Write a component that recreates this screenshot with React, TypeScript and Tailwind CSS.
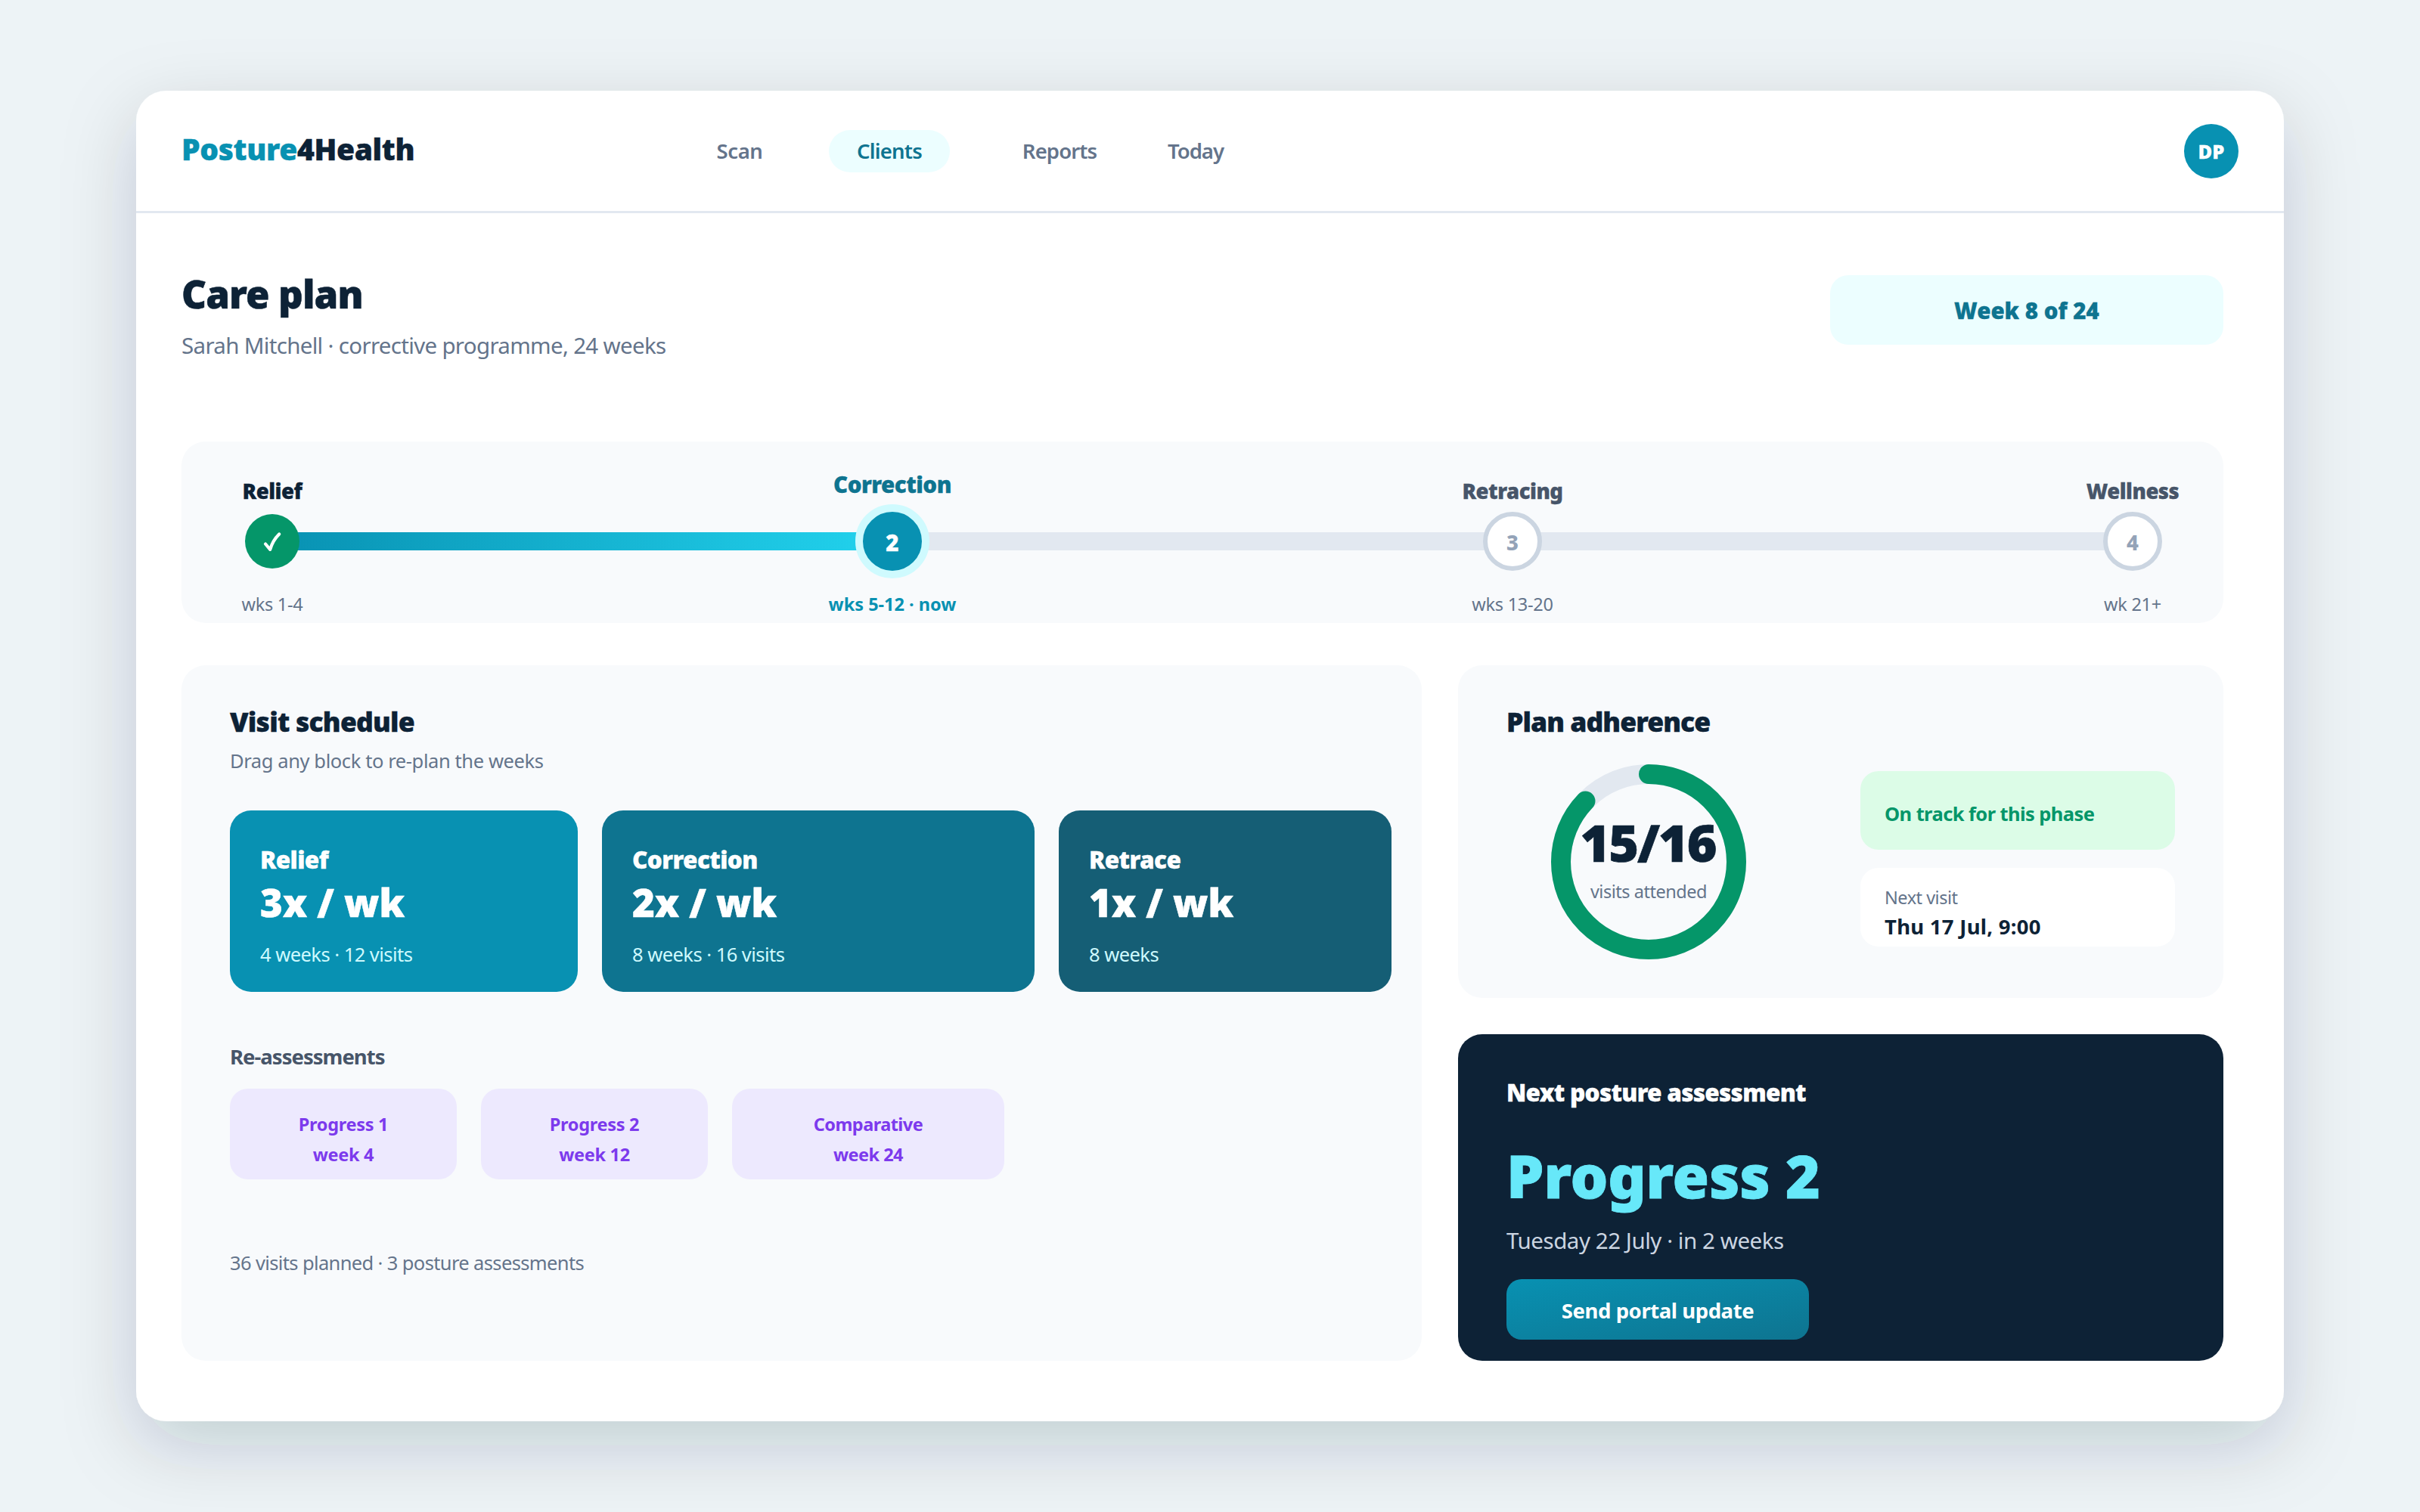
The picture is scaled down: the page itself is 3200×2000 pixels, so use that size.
import clsx from "clsx";

const navItems = [
  { label: "Scan", className: "w-[60px] tracking-[-0.4px] text-[#64748b]" },
  { label: "Clients", className: "ml-[88px] h-14 w-40 rounded-full bg-[#ecfeff] tracking-[-0.78px] text-[#0e7490]" },
  { label: "Reports", className: "ml-[96px] w-[98px] tracking-[-0.9px] text-[#64748b]" },
  { label: "Today", className: "ml-[93px] w-[76px] tracking-[-1px] text-[#64748b]" },
];

const blocks = [
  { name: "Relief", rate: "3x / wk", detail: "4 weeks · 12 visits", className: "w-[460px] bg-[#0891b2]" },
  { name: "Correction", rate: "2x / wk", detail: "8 weeks · 16 visits", className: "w-[572px] bg-[#0e7490]" },
  { name: "Retrace", rate: "1x / wk", detail: "8 weeks", className: "w-[440px] bg-[#155e75]" },
];

const reassessments = [
  { name: "Progress 1", week: "week 4", className: "w-[300px] tracking-[-0.3px]" },
  { name: "Progress 2", week: "week 12", className: "w-[300px] tracking-[-0.3px]" },
  { name: "Comparative", week: "week 24", className: "w-[360px] tracking-[-0.55px]" },
];

type PhaseState = "done" | "current" | "upcoming";

const phases: { name: string; weeks: string; state: PhaseState; step: number }[] = [
  { name: "Relief", weeks: "wks 1-4", state: "done", step: 1 },
  { name: "Correction", weeks: "wks 5-12 · now", state: "current", step: 2 },
  { name: "Retracing", weeks: "wks 13-20", state: "upcoming", step: 3 },
  { name: "Wellness", weeks: "wk 21+", state: "upcoming", step: 4 },
];

// Extra-heavy display weight
const heavy = "font-black [-webkit-text-stroke-width:0.01em]";

function PhaseNode({ state, step }: { state: PhaseState; step: number }) {
  if (state === "done") {
    return (
      <div className="size-[72px] rounded-full bg-[#059669]">
        <svg viewBox="0 0 72 72" className="size-full" fill="none">
          <path
            d="M27 39.5 L33.2 46.8 C35.5 39 39.5 32 45.2 26.5"
            stroke="#fff"
            strokeWidth="4.2"
            strokeLinecap="round"
            strokeLinejoin="round"
          />
        </svg>
      </div>
    );
  }
  if (state === "current") {
    return (
      <div
        className={clsx(
          "flex size-[98px] items-center justify-center rounded-full border-[10px] border-[#cffafe] bg-[#0891b2] pt-[5px] text-[29.5px] text-white",
          heavy,
        )}
      >
        {step}
      </div>
    );
  }
  return (
    <div className="flex size-[78px] items-center justify-center rounded-full border-[6px] border-[#cbd5e1] bg-white pt-[3px] text-[27.5px] font-extrabold text-[#94a3b8]">
      {step}
    </div>
  );
}

function Timeline() {
  return (
    <section className="relative flex h-60 justify-between rounded-[32px] bg-[#f8fafc]">
      {/* Track */}
      <div className="absolute inset-x-[120px] top-[120px] h-6 bg-[#e2e8f0]">
        <div className="h-full w-1/3 bg-[linear-gradient(to_right,#0891b2,#22d3ee)]" />
      </div>
      {phases.map((phase) => (
        <div key={phase.name} className="relative flex w-60 flex-col items-center whitespace-nowrap">
          <div
            className={clsx(
              "flex h-[84px] items-end leading-9 tracking-[-0.5px]",
              heavy,
              phase.state === "done" && "text-[27.5px] text-[#0d2236]",
              phase.state === "current" && "pb-[9px] text-[29.5px] text-[#0e7490]",
              phase.state === "upcoming" && "text-[27.5px] text-[#475569]",
            )}
          >
            {phase.name}
          </div>
          <div className="-mt-px flex h-[98px] items-center">
            <PhaseNode state={phase.state} step={phase.step} />
          </div>
          <div
            className={clsx(
              "mt-3.5 text-[23.5px] leading-10",
              phase.state === "current" ? "font-bold text-[#0891b2]" : "tracking-[-0.25px] text-[#64748b]",
            )}
          >
            {phase.weeks}
          </div>
        </div>
      ))}
    </section>
  );
}

function VisitSchedule() {
  return (
    <section className="w-[1640px] rounded-[32px] bg-[#f8fafc] pt-[50px] pr-10 pl-16">
      <h2 className={clsx("text-[35.5px] leading-[48px] tracking-[-0.78px] text-[#0d2236]", heavy)}>Visit schedule</h2>
      <p className="mt-2.5 text-[25.5px] leading-9 tracking-[-0.4px] text-[#64748b]">
        Drag any block to re-plan the weeks
      </p>
      <div className="mt-12 flex gap-8">
        {blocks.map((block) => (
          <div key={block.name} className={clsx("h-60 rounded-[28px] px-10 pt-[45px]", block.className)}>
            <div className={clsx("text-[31.5px] leading-10 tracking-[-0.6px] text-white", heavy)}>{block.name}</div>
            <div className={clsx("mt-1 text-[51px] leading-[64px] text-white", heavy)}>{block.rate}</div>
            <div className="mt-[19px] text-[25.5px] leading-9 tracking-[-0.53px] text-[#cffafe]">{block.detail}</div>
          </div>
        ))}
      </div>
      <h3 className="mt-[66px] text-[27.5px] leading-10 font-bold tracking-[-0.98px] text-[#475569]">Re-assessments</h3>
      <div className="mt-[22px] flex gap-8">
        {reassessments.map((item) => (
          <div
            key={item.name}
            className={clsx(
              "h-[120px] rounded-3xl bg-[#ede9fe] pt-[27px] text-center text-[23.5px] leading-10 font-bold text-[#7c3aed]",
              item.className,
            )}
          >
            <div>{item.name}</div>
            <div>{item.week}</div>
          </div>
        ))}
      </div>
      <p className="mt-[92px] text-[25.5px] leading-9 tracking-[-0.63px] text-[#64748b]">
        36 visits planned · 3 posture assessments
      </p>
    </section>
  );
}

function PlanAdherence() {
  return (
    <section className="h-[440px] rounded-[32px] bg-[#f8fafc] px-16 pt-[50px]">
      <h2 className={clsx("text-[35.5px] leading-[48px] tracking-[-0.95px] text-[#0d2236]", heavy)}>Plan adherence</h2>
      <div className="mt-[33px] flex items-start">
        <div className="relative ml-[59px] size-[258px]">
          <svg viewBox="0 0 258 258" className="size-full -rotate-90" fill="none" strokeWidth="26">
            <circle cx="129" cy="129" r="116" stroke="#e2e8f0" />
            <circle cx="129" cy="129" r="116" stroke="#059669" strokeLinecap="round" strokeDasharray="635 729" />
          </svg>
          <div className="absolute inset-0 flex flex-col items-center pt-[67px] whitespace-nowrap">
            <div className={clsx("pr-0.5 text-[68px] leading-[72px] tracking-[-2.1px] text-[#0d2236]", heavy)}>15/16</div>
            <div className="mt-[13px] text-[23.5px] leading-8 tracking-[-0.47px] text-[#64748b]">visits attended</div>
          </div>
        </div>
        <div className="mt-[9px] ml-[151px] flex w-[416px] flex-col gap-6">
          <div className="h-[104px] rounded-3xl bg-[#dcfce7] px-8 pt-9 text-[25.5px] leading-10 font-bold tracking-[-0.58px] text-[#059669]">
            On track for this phase
          </div>
          <div className="h-[104px] rounded-3xl bg-white px-8 pt-[23px]">
            <div className="text-[23.5px] leading-8 tracking-[-0.5px] text-[#64748b]">Next visit</div>
            <div className="mt-[5px] text-[27.5px] leading-9 font-bold tracking-[0.27px] text-[#0d2236]">Thu 17 Jul, 9:00</div>
          </div>
        </div>
      </div>
    </section>
  );
}

function NextAssessment() {
  return (
    <section className="h-[432px] rounded-[32px] bg-[#0d2236] px-16 pt-[57px]">
      <h2 className={clsx("text-[31.5px] leading-10 tracking-[-0.72px] text-white", heavy)}>Next posture assessment</h2>
      <div className={clsx("mt-[42px] text-[78.5px] leading-[96px] tracking-[-0.2px] text-[#67e8f9]", heavy)}>Progress 2</div>
      <p className="mt-[18px] text-[29.5px] leading-10 tracking-[-0.45px] text-[#cbd5e1]">Tuesday 22 July · in 2 weeks</p>
      <button className="mt-[31px] flex h-20 w-[400px] items-center justify-center rounded-[20px] bg-[linear-gradient(to_bottom_right,#0891b2,#0e7490)] pt-[3px] text-[27.5px] font-bold tracking-[-0.43px] text-white">
        Send portal update
      </button>
    </section>
  );
}

export default function App() {
  return (
    <div className="h-[2000px] w-[3200px] overflow-hidden bg-[#edf3f6] px-[180px] pt-[120px] font-['Noto_Sans',sans-serif]">
      <svg className="absolute size-0">
        <filter id="window-shadow" x="-20%" y="-20%" width="140%" height="140%">
          <feDropShadow dx="0" dy="32" stdDeviation="48" floodColor="#0f283b" floodOpacity="0.18" />
        </filter>
      </svg>
      <div className="relative h-[1760px]">
        <div className="absolute inset-0 rounded-[40px] bg-white [filter:url(#window-shadow)]" />
        <div className="relative">
          <header className="flex h-[162px] items-center border-b-[3px] border-[#e2e8f0] px-[60px] pt-px text-[27.5px] font-semibold">
            <div className={clsx("w-[708px] pb-1.5 text-[39px] tracking-[-0.35px] text-[#0d2236]", heavy)}>
              <span className="text-[#0891b2]">Posture</span>4Health
            </div>
            <nav className="flex items-center">
              {navItems.map((item) => (
                <a key={item.label} className={clsx("flex items-center justify-center whitespace-nowrap", item.className)}>
                  {item.label}
                </a>
              ))}
            </nav>
            <div
              className={clsx(
                "ml-auto flex size-[72px] items-center justify-center rounded-full bg-[#0891b2] text-[25.5px] text-white",
                heavy,
              )}
            >
              DP
            </div>
          </header>

          <main className="pr-20 pl-[60px]">
            <div className="flex h-[302px] items-start justify-between pt-[76px]">
              <div>
                <h1 className={clsx("text-[51px] leading-[60px] tracking-[-0.9px] text-[#0d2236]", heavy)}>Care plan</h1>
                <p className="mt-[19px] text-[29.5px] leading-10 tracking-[-0.68px] text-[#64748b]">
                  Sarah Mitchell · corrective programme, 24 weeks
                </p>
              </div>
              <div
                className={clsx(
                  "mt-1.5 flex h-[92px] w-[520px] items-center justify-center rounded-3xl bg-[#ecfeff] pt-0.5 text-[29.5px] text-[#0e7490]",
                  heavy,
                )}
              >
                Week 8 of 24
              </div>
            </div>

            <Timeline />

            <div className="mt-14 flex h-[920px] gap-12">
              <VisitSchedule />
              <div className="flex flex-1 flex-col gap-12">
                <PlanAdherence />
                <NextAssessment />
              </div>
            </div>
          </main>
        </div>
      </div>
    </div>
  );
}
